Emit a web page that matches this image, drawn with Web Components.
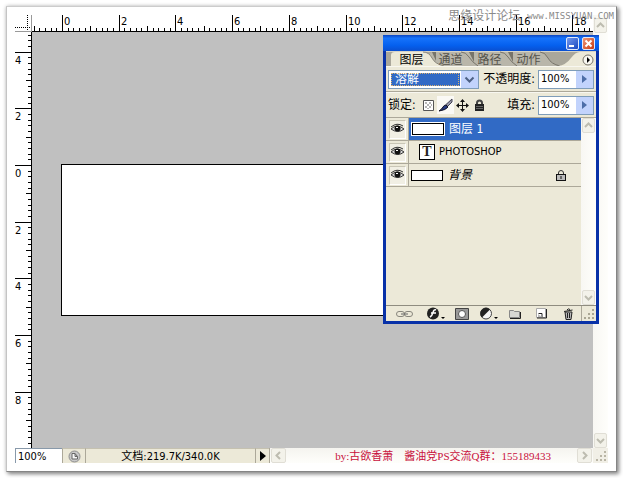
<!DOCTYPE html>
<html lang="zh-CN">
<head>
<meta charset="utf-8">
<title>图层</title>
<style>
html, body { margin: 0; height: 100%; }
body { background: #fff; display: flex; font: 12px/14px "DejaVu Sans Condensed", "Noto Sans CJK SC", sans-serif; color: #000; overflow: hidden; }
</style>
</head>
<body>
<image-window></image-window>

<template id="t-window">
<style>
:host { flex: 1; display: grid; position: relative; box-sizing: border-box; margin: 6px; padding: 8px;
  grid-template: 17px minmax(0, 1fr) 15px / 17px minmax(0, 1fr) 15px;
  background: #fff; border: 1px solid; border-color: #ccc #858585 #858585 #c4c4c4; box-shadow: 2px 2px 4px #888, 0 0 4px #ccc; }
.corner { border-right: 1px solid #999; border-bottom: 1px solid #999; }
.corner svg, .grip svg { display: block; }
.canvas { grid-area: 2 / 2; background: #c0c0c0; overflow: hidden; padding: 132px 40px 0 29px; }
.left { grid-area: 2 / 1; }
.side { grid-area: 1 / 3 / 3 / 4; padding-top: 3px; }
.foot { grid-area: 3 / 1 / 4 / 3; }
.doc { background: #fff; border: 1px solid #000; height: 150px; }
.grip { grid-area: 3 / 3; background: #f1efe6; }
.mark { position: absolute; top: 0; right: 2px; display: flex; gap: 7px; align-items: center; color: #8a8a8a; font-size: 12px; line-height: 18px; }
.mark a { font: 9px/18px "DejaVu Sans Mono", monospace; color: inherit; text-decoration: none; }
layers-panel { position: absolute; top: 28px; right: 17px; }
</style>
<div class="corner"><svg width="16" height="16" stroke="#000" stroke-dasharray="1 1"><path d="M12.500 0V16M0 12.500H16"/></svg></div>
<page-ruler axis="x" origin="30"></page-ruler>
<page-ruler class="left" axis="y" origin="133"></page-ruler>
<div class="canvas"><div class="doc"></div></div>
<pale-scroll class="side" axis="y"></pale-scroll>
<status-bar class="foot"></status-bar>
<div class="grip"><svg width="15" height="15" fill="#b9b5a5"><path d="M11 3h2v2h-2zM7 7h2v2H7zM11 7h2v2h-2zM3 11h2v2H3zM7 11h2v2H7zM11 11h2v2h-2z"/></svg></div>
<div class="mark"><span>思缘设计论坛</span><a href="#">www.MISSYUAN.COM</a></div>
<layers-panel></layers-panel>
</template>

<template id="t-ruler">
<style>
:host { display: block; overflow: hidden; box-sizing: border-box; min-width: 0; min-height: 0; background: #fff; }
:host([axis=x]) { border-bottom: 1px solid #000; }
:host([axis=y]) { border-right: 1px solid #000; }
svg { display: block; }
text { font: 11px "DejaVu Sans Condensed", sans-serif; }
</style>
<div></div>
</template>

<template id="t-scroll">
<style>
:host { display: flex; justify-content: space-between; background: linear-gradient(#f5f4ef, #fefefb); min-width: 0; }
:host([axis=y]) { flex-direction: column; background: linear-gradient(90deg, #f8f7f3, #fefefb); }
:host([axis=x]) button { width: 15px; }
button { flex: none; width: 13px; height: 15px; margin: 0 1px; padding: 0; border: 1px solid #e0ded5; border-radius: 2px; background: #f3f2ea; box-sizing: border-box; display: grid; place-items: center; }
svg { display: block; fill: none; stroke: #bdbcb0; stroke-width: 2; }
</style>
<button aria-label="后退"><svg width="9" height="9"><path class="a"/></svg></button>
<button aria-label="前进"><svg width="9" height="9"><path class="b"/></svg></button>
</template>

<template id="t-status">
<style>
:host { display: flex; overflow: hidden; background: #ece9d8; font-size: 11px; line-height: 15px; }
input { width: 47px; box-sizing: border-box; border: 0; border-top: 1px solid #89a; border-left: 1px solid #89a; padding: 0 2px; margin: 0; background: #fff; font: inherit; }
.cell { box-sizing: border-box; border-left: 1px solid #aca899; border-top: 1px solid #c5c1b0; display: grid; place-items: center; padding: 0; }
button.cell { border-width: 1px 0 0 1px; border-style: solid; background: none; width: 14px; }
.vc { width: 23px; } .size { width: 170px; }
.bar { flex: 1; display: flex; position: relative; border-left: 1px solid #aca899; min-width: 0; }
pale-scroll { flex: 1; }
.by { position: absolute; right: 42px; top: 0; color: #c8103c; font: 11px/16px "Liberation Serif", "Noto Sans CJK SC", serif; white-space: pre; }
</style>
<input aria-label="缩放" value="100%">
<div class="cell vc"><svg width="13" height="13"><circle cx="6.500" cy="6.500" r="5.500" fill="#c9c9c9" stroke="#8d8d8d"/><path d="M4 3.500h3l2.500 3v2.500H4zM7 3.500v3h2.500" fill="#f6f6f6" stroke="#666"/></svg></div>
<div class="cell size"><span>文档:219.7K/340.0K</span></div>
<button class="cell" aria-label="状态菜单"><svg width="6" height="10"><path d="M0 0L6 5L0 10z"/></svg></button>
<div class="bar"><pale-scroll axis="x"></pale-scroll><span class="by">by:古欲香萧　酱油党PS交流Q群：155189433</span></div>
</template>

<template id="t-panel">
<style>
:host { display: block; width: 216px; box-sizing: border-box; background: #0831a8; padding: 0 3px 3px; }
header { height: 16px; margin: 0 -3px; padding: 0 4px; display: flex; justify-content: flex-end; align-items: center; gap: 3px; background: linear-gradient(#0b45c0, #1673fb 20%, #0560ee 65%, #0a4fd0); }
header button { width: 13px; height: 13px; padding: 0; border: 1px solid #dfe8fb; border-radius: 2px; background: linear-gradient(135deg, #7399ee, #1746c0); box-sizing: border-box; }
header .x { background: linear-gradient(135deg, #ee9676, #c73a12); }
svg { display: block; }
.body { background: #ece9d8; }
.tabs { position: relative; display: flex; height: 15px; padding-left: 6px; background: #aaa79b; }
.tabs > svg { position: absolute; left: 0; top: 0; }
.tabs button { position: relative; width: 39px; height: 18px; padding: 0; border: 0; background: none; color: #55534c; font: inherit; line-height: 18px; text-align: center; }
.tabs button.on { color: #000; }
.tabs .more { width: 12px; height: 15px; margin-left: auto; margin-right: 2px; }
.opt { display: flex; align-items: center; height: 26px; box-sizing: border-box; padding: 0 2px; border-bottom: 1px solid #aca899; border-top: 1px solid #f8f7f0; }
.opt label { white-space: nowrap; }
.sel { position: relative; width: 91px; }
.sel select { appearance: none; width: 91px; height: 19px; margin: 0; padding: 0 0 0 6px; font: inherit; line-height: 17px; color: #fff; border: 1px solid #7f9db9; border-radius: 0; background: #316ac5; box-shadow: inset 0 0 0 2px #fff; display: block; }
.sel::before { content: ""; position: absolute; left: 3px; top: 3px; right: 20px; bottom: 3px; border: 1px dotted #d9b070; box-sizing: border-box; pointer-events: none; }
.sel svg { position: absolute; right: 0; top: 1px; pointer-events: none; border-right: 1px solid #7f9db9; border-left: 1px solid #fff; }
.r { margin-left: auto; margin-right: 3px; }
.num { display: flex; width: 56px; height: 19px; box-sizing: border-box; border: 1px solid #7f9db9; background: #fff; }
.num input { width: 37px; box-sizing: border-box; border: 0; padding: 0 2px; margin: 0; font: inherit; font-size: 11px; background: none; }
.num button { flex: 1; padding: 0; border: 0; background: #c2d3fc; display: grid; place-items: center; }
.locks { display: flex; margin-left: 4px; }
.locks button { width: 17px; height: 18px; padding: 0; border: 0; background: none; display: grid; place-items: center; }
.locks .on { background: #faf9f5; }
.list { display: flex; height: 187px; }
.rows { flex: 1; }
.list pale-scroll { width: 15px; }
footer { display: flex; align-items: center; height: 15px; border-top: 1px solid #8f8c80; }
footer button { width: 27px; height: 15px; padding: 0; border: 0; background: none; display: grid; place-items: center; }
footer button:first-child { width: 37px; }
.grip { border-left: 1px solid #aca899; width: 14px; height: 15px; margin-left: auto; }
</style>
<header><button aria-label="最小化"><svg width="11" height="11"><path d="M2 7h5v2H2z" fill="#fff"/></svg></button><button class="x" aria-label="关闭"><svg width="11" height="11"><path d="M2.500 2.500l6 6M8.500 2.500l-6 6" stroke="#fff" stroke-width="2"/></svg></button></header>
<div class="body">
<nav class="tabs">
<svg width="210" height="15"><path d="M0 0H210V1H0z" fill="#d6d3c7"/><path d="M44 15V3Q44 1 48 1H152Q158 1 162 7T174 15z" fill="#b9b6aa"/><path d="M75 1Q80 1 83 6T92 15M114 1Q119 1 122 6T131 15M154 1Q159 1 162 7T174 15" fill="none" stroke="#77746a"/><path d="M46 1h4v9zM83 1h5v10zM122 1h5v10z" fill="#77746a"/><path d="M5 15V4Q5 1 9 1H37Q43 1 46 7T58 15z" fill="#ece9d8"/><path d="M37 1Q43 1 46 7T58 15" fill="none" stroke="#8a877c"/><path d="M172 15Q180 14 185 7T195 1H210V15z" fill="#ece9d8"/></svg>
<button class="on">图层</button><button>通道</button><button>路径</button><button>动作</button>
<button class="more" aria-label="面板菜单"><svg width="12" height="14"><circle cx="6" cy="8" r="5" fill="#f8f7f0" stroke="#77746a"/><path d="M5 5l3 3l-3 3z"/></svg></button>
</nav>
<div class="opt">
<div class="sel"><select aria-label="混合模式"><option>溶解</option></select><svg width="17" height="17"><rect width="17" height="17" fill="#c2d3fc"/><path d="M4.500 6.500l4 4l4-4" fill="none" stroke="#4d6185" stroke-width="2"/></svg></div>
<label class="r" for="op">不透明度:</label><div class="num"><input id="op" value="100%"><button aria-label="不透明度滑块"><svg width="5" height="8"><path d="M0 0l5 4l-5 4z" fill="#4d6ea8"/></svg></button></div>
</div>
<div class="opt">
<span>锁定:</span>
<div class="locks">
<button aria-label="锁定透明像素"><svg width="11" height="11"><path d="M.5.5h10v10H.5z" fill="#fff" stroke="#555"/><path d="M2 2h2v2H2zM6 2h2v2H6zM4 4h2v2H4zM8 4h1v2H8zM2 6h2v2H2zM6 6h2v2H6zM4 8h2v1H4z" fill="#b5b5b5"/></svg></button>
<button class="on" aria-label="锁定图像像素"><svg width="15" height="15"><path d="M14 1L8 6.500L9.500 8.500L14 4z" fill="#99a" stroke="#445"/><path d="M8 7l2 2Q8 12 1 13Q4 11 5 9Q6 7 8 7z" fill="#263a80" stroke="#112"/></svg></button>
<button aria-label="锁定位置"><svg width="13" height="13"><path d="M6.500 1V12M1 6.500H12" stroke="#111"/><path d="M6.500 0l2.500 3h-5zM6.500 13l2.500-3h-5zM0 6.500l3-2.500v5zM13 6.500l-3-2.500v5z" fill="#111"/></svg></button>
<button aria-label="全部锁定"><svg width="11" height="13"><path d="M3 6V4Q3 1.500 5.500 1.500T8 4V6" fill="none" stroke="#444" stroke-width="2"/><rect x="1" y="5" width="9" height="7" fill="#222"/><path d="M2 7.500h7M2 9.500h7" stroke="#666"/></svg></button>
</div>
<label class="r" for="fi">填充:</label><div class="num"><input id="fi" value="100%"><button aria-label="填充滑块"><svg width="5" height="8"><path d="M0 0l5 4l-5 4z" fill="#4d6ea8"/></svg></button></div>
</div>
<div class="list">
<div class="rows">
<layer-row selected>图层 1</layer-row>
<layer-row kind="text">PHOTOSHOP</layer-row>
<layer-row kind="locked">背景</layer-row>
</div>
<pale-scroll axis="y"></pale-scroll>
</div>
<footer>
<button aria-label="链接图层"><svg width="19" height="8" fill="none" stroke="#88867d"><rect x="1.500" y="1.500" width="8" height="5" rx="2.500"/><rect x="9.500" y="1.500" width="8" height="5" rx="2.500"/><path d="M6 4h7" stroke="#666"/></svg></button>
<button aria-label="图层样式"><svg width="19" height="13"><circle cx="7" cy="6.500" r="6" fill="#222"/><path d="M10 3Q8 2 7 5.500T4 10M5 6h5" fill="none" stroke="#fff" stroke-width="1.500"/><path d="M15 10h4l-2 2z"/></svg></button>
<button aria-label="图层蒙版"><svg width="14" height="12"><path d="M.5.5h13v11H.5z" fill="#999" stroke="#444"/><circle cx="7" cy="6" r="3.500" fill="#fff" stroke="#555"/></svg></button>
<button aria-label="调整图层"><svg width="19" height="13"><circle cx="7" cy="6.500" r="5.500" fill="#f5f5f5" stroke="#444"/><path d="M11 2.500A5.600 5.600 0 1 0 3 10.500z" fill="#222"/><path d="M15 10h4l-2 2z"/></svg></button>
<button aria-label="新建组"><svg width="12" height="10"><path d="M.5 8.500V1.500h4l1 1h5v6z" fill="#d8d8d4" stroke="#888"/><path d="M1 9.500h10.500V3" fill="none" stroke="#222"/></svg></button>
<button aria-label="新建图层"><svg width="11" height="11"><path d="M.5.5h9v9h-9z" fill="#fff" stroke="#aaa"/><path d="M1 10h9.500V1" fill="none" stroke="#222"/><path d="M2.500 5.500h3.500v3.500" fill="none" stroke="#222"/><path d="M2 6l4 3H2z" fill="#bbb"/></svg></button>
<button aria-label="删除图层"><svg width="11" height="12"><path d="M2 4h7l-1 7.500H3z" fill="#bbb" stroke="#222"/><path d="M1 3.500L9.500 2M4 2Q5 0 7 1.500M4.500 5v5M6.500 5v5" fill="none" stroke="#222"/></svg></button>
<div class="grip"><svg width="13" height="15" fill="#aaa693"><path d="M10 3h2v2h-2zM6 7h2v2H6zM10 7h2v2h-2zM2 11h2v2H2zM6 11h2v2H6zM10 11h2v2h-2z"/></svg></div>
</footer>
</div>
</template>

<template id="t-layer">
<style>
:host { display: flex; height: 23px; box-sizing: border-box; border-bottom: 1px solid #aca899; align-items: stretch; }
button { flex: none; width: 23px; padding: 0; border: 0; border-right: 1px solid #aca899; background: #ece9d8; display: grid; place-items: center; }
.eye { background: #f1efe4; border: 1px solid; border-color: #c9c6b6 #fff #fff #c9c6b6; padding: 2px 1px 4px; }
.main { flex: 1; display: flex; align-items: center; padding-left: 2px; }
:host([selected]) .main { background: #316ac5; color: #fff; }
.pic { width: 30px; height: 9px; background: #fff; border: 1px solid #000; flex: none; }
:host([selected]) .pic { outline: 1px solid #fff; margin-left: 1px; height: 10px; }
.name { margin-left: 5px; flex: 1; white-space: nowrap; }
:host([kind=text]) .pic { width: 14px; height: 14px; margin-left: 8px; font: bold 14px/14px "Liberation Serif", serif; text-align: center; color: #222; }
:host([kind=text]) .name { margin-left: 4px; font-size: 11px; }
:host([kind=locked]) .name { font-style: italic; }
svg { display: block; }
.lock { margin-right: 15px; }
</style>
<button aria-label="可见性"><span class="eye"><svg width="13" height="11"><path d="M0 6Q6 0 13 6Q7 11 0 6z" fill="#ddd" stroke="#333"/><path d="M0 4Q6-1 12 3" fill="none" stroke="#333"/><circle cx="6.500" cy="5.500" r="3" fill="#111"/><path d="M5 4h2v1H5z" fill="#fff"/></svg></span></button>
<div class="main"><span class="pic"></span><span class="name"><slot></slot></span></div>
</template>

<script>
const mount = (el, id) => {
  const root = el.attachShadow({ mode: "open" });
  root.append(document.getElementById(id).content.cloneNode(true));
  return root;
};

class PageRuler extends HTMLElement {
  connectedCallback() {
    this.holder = mount(this, "t-ruler").querySelector("div");
    this.draw();
    new ResizeObserver(() => this.draw()).observe(this);
  }
  // Ten ticks per pair of centimetres, a label at each even centimetre.
  draw() {
    const horizontal = this.getAttribute("axis") === "x";
    const origin = Number(this.getAttribute("origin"));
    const reach = horizontal ? this.clientWidth : this.clientHeight;
    const step = 56.7 / 10;
    let out = "";
    for (let n = Math.ceil(-origin / step); origin + n * step < reach; n++) {
      const at = Math.round(origin + n * step);
      const len = n % 10 === 0 ? 16 : n % 5 === 0 ? 5 : 3;
      out += horizontal
        ? `<rect x="${at}" y="${16 - len}" width="1" height="${len}"/>`
        : `<rect x="${16 - len}" y="${at}" width="${len}" height="1"/>`;
      if (n % 10 === 0 && at + 14 < reach) {
        const label = Math.abs(n / 5);
        out += horizontal
          ? `<text x="${at + 2}" y="10">${label}</text>`
          : `<text x="0" y="${at + 12}">${label}</text>`;
      }
    }
    const w = horizontal ? reach : 16, h = horizontal ? 16 : reach;
    this.holder.innerHTML = `<svg width="${w}" height="${h}" shape-rendering="crispEdges">${out}</svg>`;
  }
}

class PaleScroll extends HTMLElement {
  connectedCallback() {
    const root = mount(this, "t-scroll");
    const y = this.getAttribute("axis") === "y";
    root.querySelector(".a").setAttribute("d", y ? "M1 6l3.500-3.500L8 6" : "M6 1L2.500 4.500L6 8");
    root.querySelector(".b").setAttribute("d", y ? "M1 3l3.500 3.500L8 3" : "M3 1l3.500 3.500L3 8");
  }
}

class LayerRow extends HTMLElement {
  connectedCallback() {
    const root = mount(this, "t-layer");
    const kind = this.getAttribute("kind");
    if (kind === "text") root.querySelector(".pic").textContent = "T";
    if (kind === "locked") {
      root.querySelector(".main").insertAdjacentHTML("beforeend",
        `<svg class="lock" width="10" height="12"><path d="M2.500 6V4Q2.500 1.500 5 1.500T7.500 4V6" fill="none" stroke="#333"/><rect x=".5" y="5.500" width="9" height="6" fill="#bbb" stroke="#111"/><path d="M5 7v3" stroke="#111"/></svg>`);
    }
  }
}

class StatusBar extends HTMLElement { connectedCallback() { mount(this, "t-status"); } }
class LayersPanel extends HTMLElement { connectedCallback() { mount(this, "t-panel"); } }
class ImageWindow extends HTMLElement { connectedCallback() { mount(this, "t-window"); } }

customElements.define("page-ruler", PageRuler);
customElements.define("pale-scroll", PaleScroll);
customElements.define("layer-row", LayerRow);
customElements.define("status-bar", StatusBar);
customElements.define("layers-panel", LayersPanel);
customElements.define("image-window", ImageWindow);
</script>
</body>
</html>
